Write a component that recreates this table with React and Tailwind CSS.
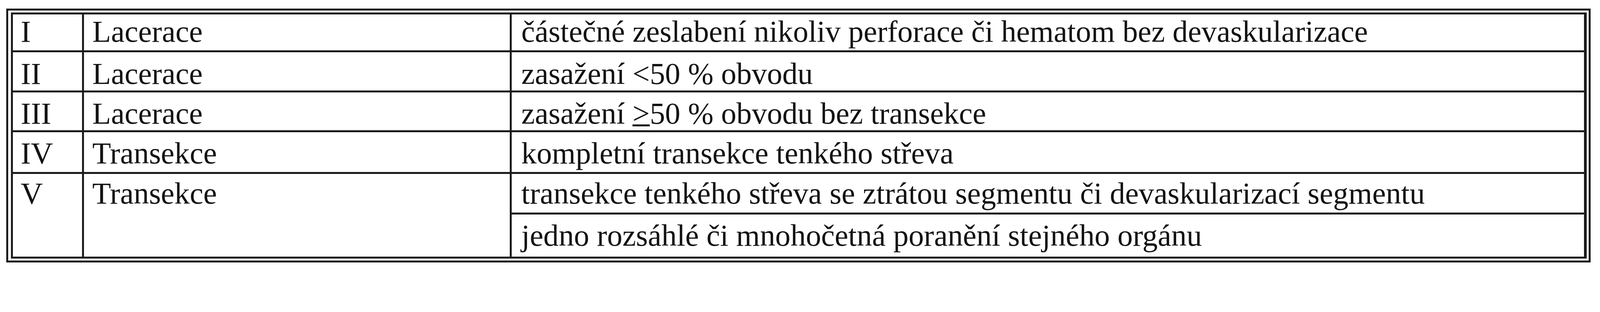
// sizes are the reference's pixels divided by ~1.15 (the page renders at that scale)
const cell = 'bg-white text-[78.3px] leading-[87px] text-[#141213] whitespace-nowrap overflow-hidden'

export default function App() {
  return (
    <div className="min-h-[696px] bg-white pt-[21.7px] pl-[15.7px]" style={{ fontFamily: '"Liberation Serif", "Times New Roman", serif' }}>
      <div className="w-[4056px] border-[5.2px] border-[#1c1a1b] pt-[5.2px] pl-[7px] pr-[4.3px] pb-[5.2px]">
        <div className="grid grid-cols-[177.4px_1089.6px_2745.2px] grid-rows-[92.2px_97.4px_96.5px_102.6px_98.3px_107.8px] gap-[5.2px] bg-[#1c1a1b] p-[5.2px]">
          {/* I */}
          <div className={`${cell} pl-[20px] pt-0`}>I</div>
          <div className={`${cell} pl-[20.9px] pt-0`}>Lacerace</div>
          <div className={`${cell} pl-[24.3px] pt-0`}>částečné zeslabení nikoliv perforace či hematom bez devaskularizace</div>

          {/* II */}
          <div className={`${cell} pl-[20px] pt-[10.4px]`}>II</div>
          <div className={`${cell} pl-[20.9px] pt-[10.4px]`}>Lacerace</div>
          <div className={`${cell} pl-[24.3px] pt-[10.4px]`}>zasažení &lt;50 % obvodu</div>

          {/* III */}
          <div className={`${cell} pl-[20px] pt-[10.4px]`}>III</div>
          <div className={`${cell} pl-[20.9px] pt-[10.4px]`}>Lacerace</div>
          <div className={`${cell} pl-[24.3px] pt-[10.4px]`}>
            zasažení <span className="underline decoration-[5px] underline-offset-[2px]">&gt;</span>50 % obvodu bez transekce
          </div>

          {/* IV */}
          <div className={`${cell} pl-[20px] pt-[10.4px]`}>IV</div>
          <div className={`${cell} pl-[20.9px] pt-[10.4px]`}>Transekce</div>
          <div className={`${cell} pl-[24.3px] pt-[10.4px]`}>kompletní transekce tenkého střeva</div>

          {/* V */}
          <div className={`${cell} row-span-2 pl-[20px] pt-[5.2px]`}>V</div>
          <div className={`${cell} row-span-2 pl-[20.9px] pt-[5.2px]`}>Transekce</div>
          <div className={`${cell} pl-[24.3px] pt-[5.2px]`}>transekce tenkého střeva se ztrátou segmentu či devaskularizací segmentu</div>
          <div className={`${cell} pl-[24.3px] pt-[9.6px]`}>jedno rozsáhlé či mnohočetná poranění stejného orgánu</div>
        </div>
      </div>
    </div>
  )
}
